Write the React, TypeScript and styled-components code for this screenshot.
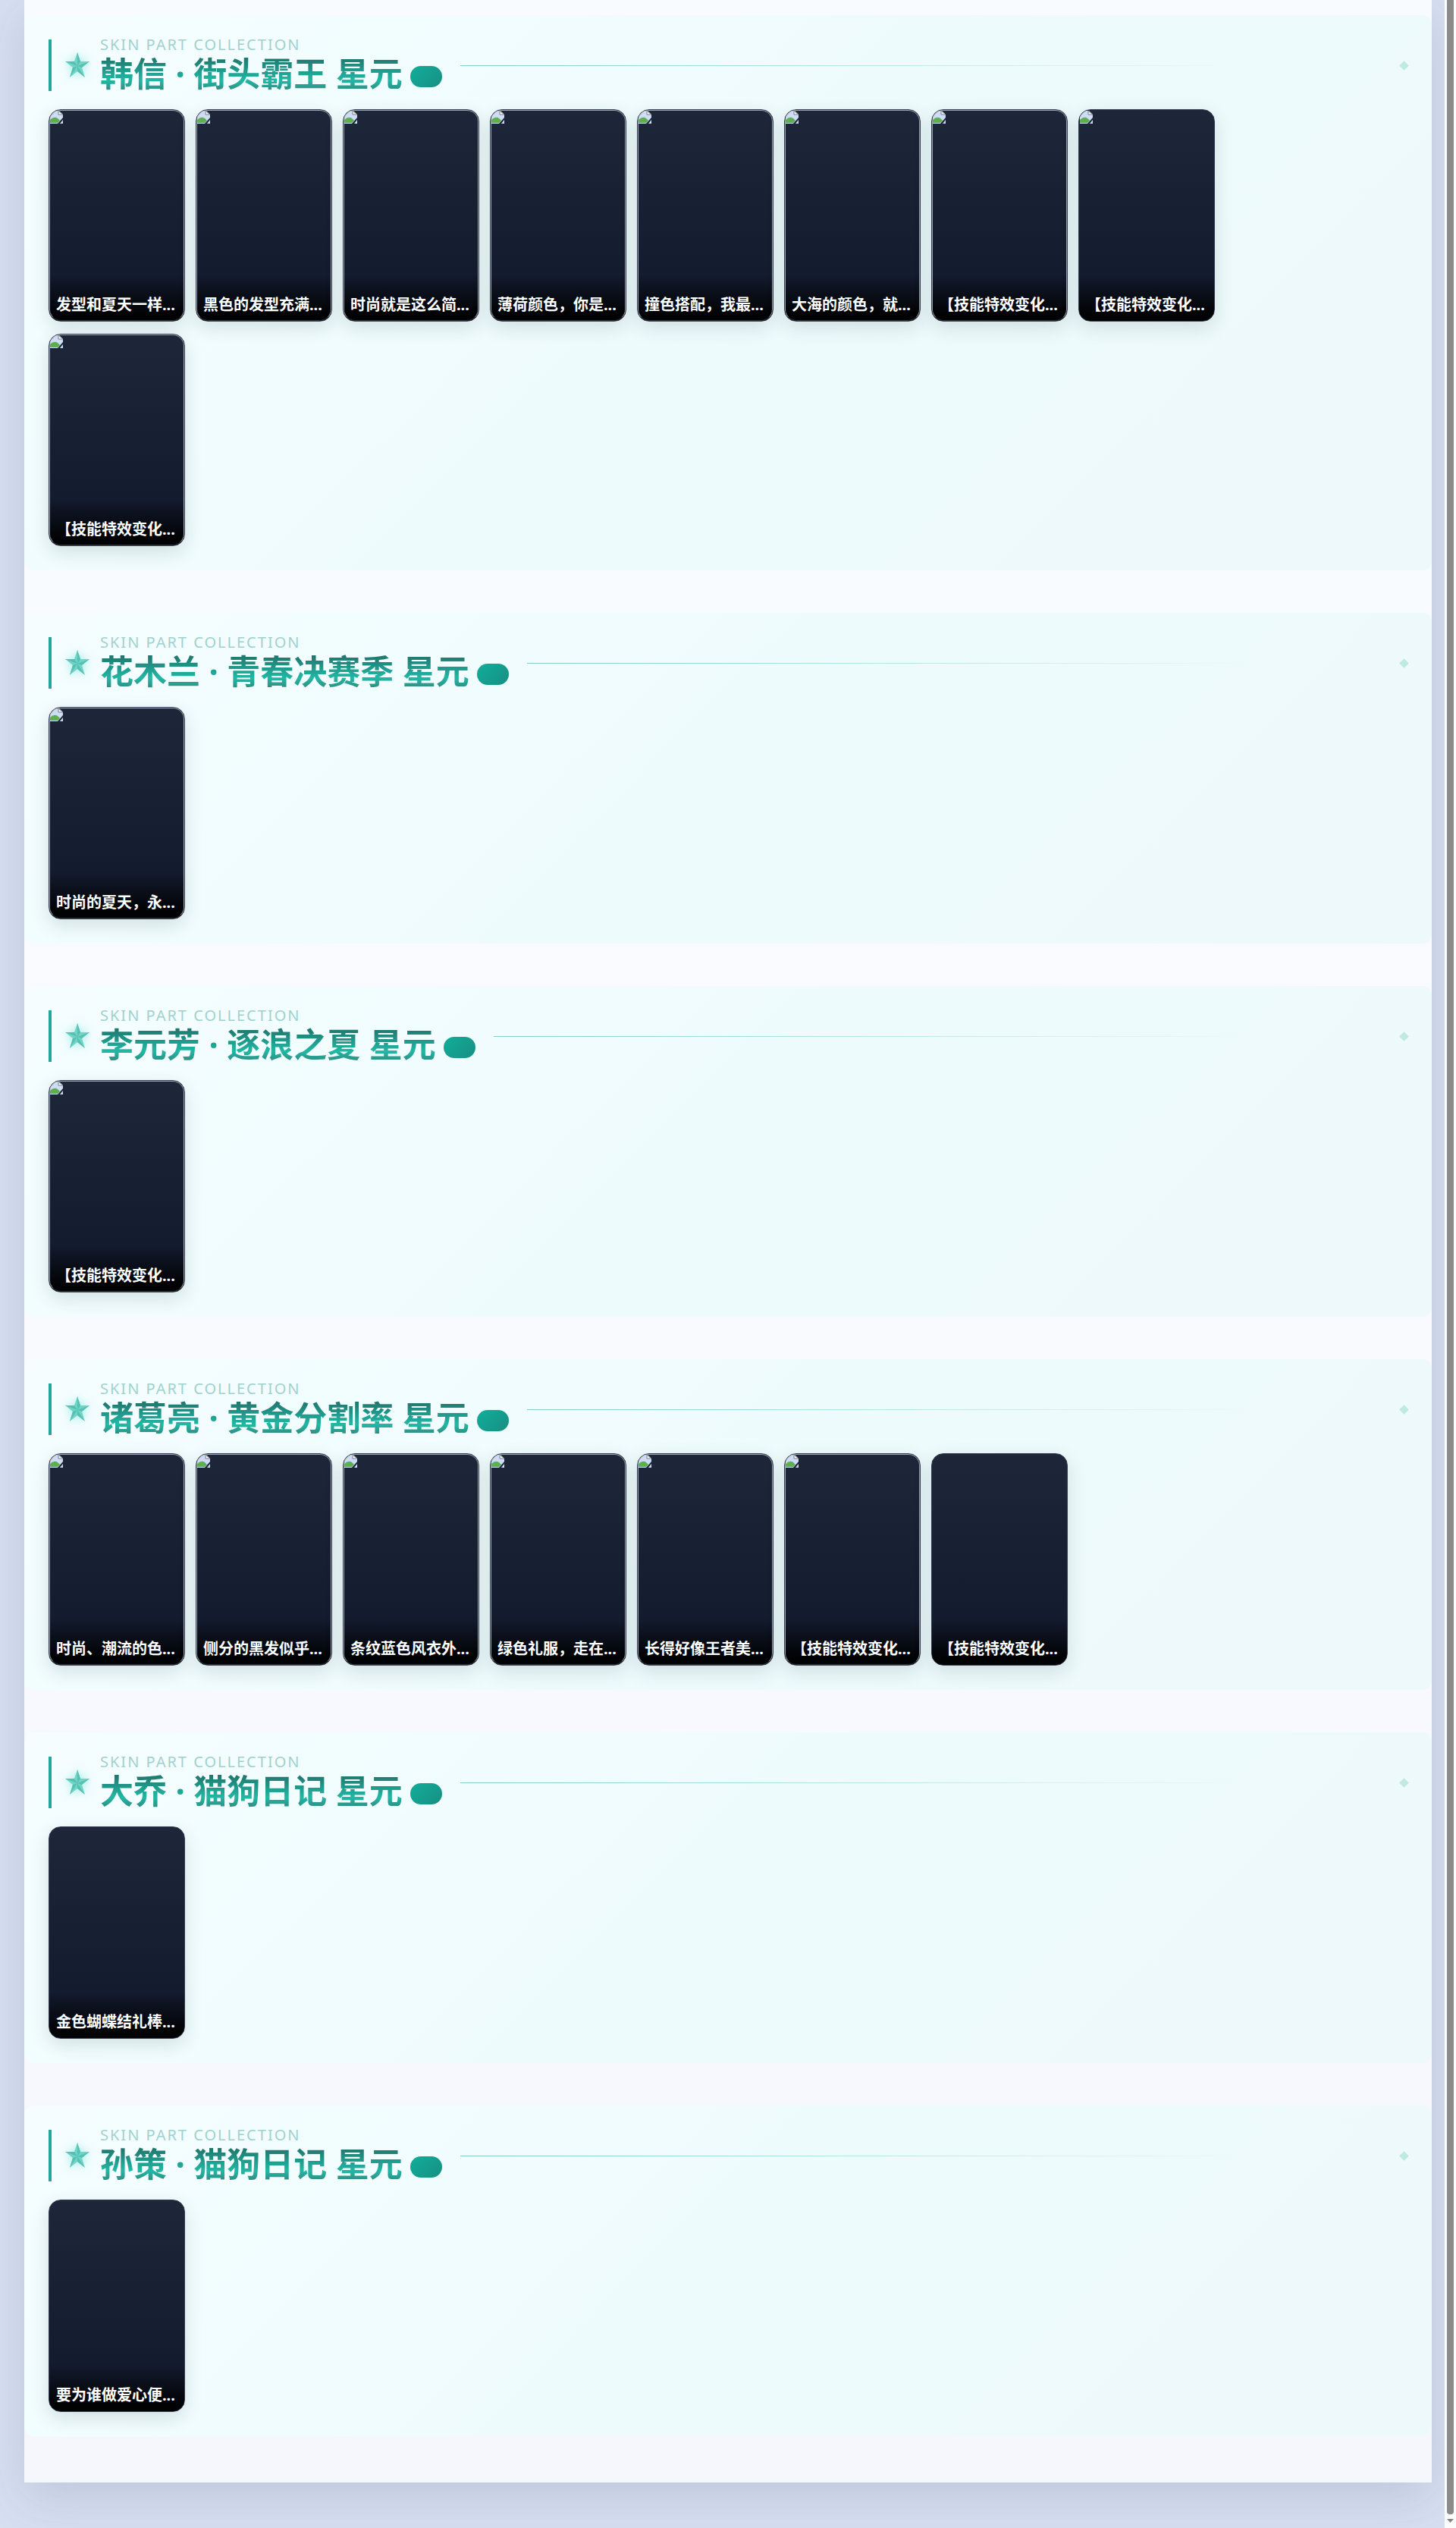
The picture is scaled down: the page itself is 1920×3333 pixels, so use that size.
import React from 'react';
import styled, { createGlobalStyle } from 'styled-components';

const GlobalStyle = createGlobalStyle`
  *, *::before, *::after { box-sizing: border-box; }
  html { background: #d6e0f0; }
  body {
    margin: 0;
    font-family: "Noto Sans", "Noto Sans CJK SC", sans-serif;
    -webkit-font-smoothing: antialiased;
  }
`;

const Shell = styled.div`
  display: grid;
  grid-template-columns: minmax(0, 1fr) 15px;
  overflow: hidden;
`;

const Backdrop = styled.div`
  padding: 0 17px 60px 32px;
  background: #d7e0f1;
`;

const Sheet = styled.main`
  display: flex;
  flex-direction: column;
  gap: 56px;
  padding: 20px 0 61px;
  background: linear-gradient(180deg, #f8fbff 0%, #f8fafe 60%, #f5f7fc 100%);
  box-shadow: 0 20px 60px rgba(80, 80, 130, 0.18);
`;

const Section = styled.section`
  padding: 32px;
  border-radius: 12px;
  background: linear-gradient(135deg, #f5fdff 0%, #f2fdfe 20%, #eefbfd 50%, #edf9fb 100%);
`;

const Header = styled.header`
  display: flex;
  align-items: center;
  height: 68px;
  margin-bottom: 24px;
  padding-left: 18px;
  border-left: 4px solid #26a69a;
`;

const Star = styled.svg`
  flex: none;
  width: 32px;
  height: 40px;
  margin-right: 14px;
  filter: drop-shadow(0 0 6px rgba(64, 224, 200, 0.5));
`;

const Eyebrow = styled.p`
  margin: 0 0 8px;
  font-size: 20px;
  line-height: 14px;
  letter-spacing: 2px;
  color: #a0d2cd;
`;

const Title = styled.h2`
  display: flex;
  align-items: center;
  gap: 10px;
  margin: 0;
  font-size: 44px;
  line-height: 46px;
  font-weight: 700;
  white-space: nowrap;
`;

const TitleText = styled.span`
  color: transparent;
  background: linear-gradient(180deg, #22756c 5%, #1f9a8c 40%, #22b8a5 70%, #2f8f84 95%);
  background-clip: text;
  -webkit-background-clip: text;
`;

const Pill = styled.span`
  width: 42px;
  height: 28px;
  margin-top: 8px;
  border-radius: 14px;
  background: linear-gradient(135deg, #12ae9b, #178f82);
`;

const Rule = styled.span`
  flex: 1;
  height: 1px;
  margin: 0 26px 0 24px;
  background: linear-gradient(90deg, #84cdc5, rgba(132, 205, 197, 0) 85%);
`;

const Diamond = styled.span`
  width: 9px;
  height: 9px;
  background: #bfeae1;
  transform: rotate(45deg);
`;

const Cards = styled.ul`
  display: flex;
  flex-wrap: wrap;
  gap: 16px 14px;
  max-width: 1600px;
  margin: 0;
  padding: 0;
  list-style: none;
`;

const Card = styled.li<{ $outlined: boolean }>`
  position: relative;
  display: flex;
  flex-direction: column;
  justify-content: space-between;
  width: 180px;
  height: 280px;
  overflow: hidden;
  border: 1px solid #333c50;
  border-radius: 16px;
  background: linear-gradient(180deg, #1e273a 0%, #10182b 100%);
  box-shadow: 0 8px 24px rgba(20, 60, 60, 0.14);

  &::after {
    content: "";
    position: absolute;
    inset: 0;
    border: ${(p) => (p.$outlined ? '1px solid rgba(192, 200, 205, 0.8)' : '0')};
    border-bottom-color: rgba(192, 200, 205, 0.25);
    border-radius: 15px;
  }
`;

const Broken = styled.svg`
  width: 18px;
  height: 18px;
`;

const Caption = styled.p`
  margin: auto 0 0;
  padding: 26px 9px 7px;
  overflow: hidden;
  font-size: 20px;
  line-height: 28px;
  font-weight: 700;
  color: #fff;
  white-space: nowrap;
  background: linear-gradient(180deg, rgba(0, 0, 0, 0), rgba(0, 0, 0, 0.9) 85%);
`;

const Scrollbar = styled.div`
  display: flex;
  flex-direction: column;
  align-items: center;
  background: #fcfcfc;
`;

const Thumb = styled.div`
  flex: 1;
  width: 9px;
  border-radius: 0 0 4px 4px;
  background: #8b8b8b;
`;

const Arrow = styled.svg`
  width: 9px;
  height: 18px;
`;

type Item = { text: string; icon: 'clipped' | 'plain' | 'none' };
type Group = { title: string; items: Item[] };

const item = (text: string, icon: Item['icon'] = 'clipped'): Item => ({ text, icon });

const groups: Group[] = [
  {
    title: '韩信 · 街头霸王 星元',
    items: [
      item('发型和夏天一样...'),
      item('黑色的发型充满...'),
      item('时尚就是这么简...'),
      item('薄荷颜色，你是...'),
      item('撞色搭配，我最...'),
      item('大海的颜色，就...'),
      item('【技能特效变化...'),
      item('【技能特效变化...', 'plain'),
      item('【技能特效变化...'),
    ],
  },
  { title: '花木兰 · 青春决赛季 星元', items: [item('时尚的夏天，永...')] },
  { title: '李元芳 · 逐浪之夏 星元', items: [item('【技能特效变化...')] },
  {
    title: '诸葛亮 · 黄金分割率 星元',
    items: [
      item('时尚、潮流的色...'),
      item('侧分的黑发似乎...'),
      item('条纹蓝色风衣外...'),
      item('绿色礼服，走在...'),
      item('长得好像王者美...'),
      item('【技能特效变化...'),
      item('【技能特效变化...', 'none'),
    ],
  },
  { title: '大乔 · 猫狗日记 星元', items: [item('金色蝴蝶结礼棒...', 'none')] },
  { title: '孙策 · 猫狗日记 星元', items: [item('要为谁做爱心便...', 'none')] },
];

function StarIcon() {
  return (
    <Star viewBox="0 0 32 40" aria-hidden="true">
      <path d="M16 3 L20 15 L32 15 L22 23 L26 36 L16 28 L6 36 L10 23 L0 15 L12 15 Z" fill="#6fd6c7" />
      <path
        d="M16 3 L20 15 L16 21 Z M32 15 L22 23 L16 21 Z M26 36 L16 28 L16 21 Z M6 36 L10 23 L16 21 Z M0 15 L12 15 L16 21 Z"
        fill="#58bfb3"
      />
    </Star>
  );
}

function BrokenImage() {
  return (
    <Broken viewBox="0 0 18 18" aria-hidden="true">
      <path d="M1 1 H13 L18 6 V18 H1 Z" fill="#cfdcf5" />
      <path d="M12 1 V6 H18 Z" fill="#fff" stroke="#77808c" strokeWidth="1" />
      <path d="M1 17 V13 Q8 6 14 14 L11 17 Z" fill="#5fae50" />
      <path d="M11 18 L18 10 V13 L14 18 Z" fill="#1e293b" />
    </Broken>
  );
}

export default function App() {
  return (
    <>
      <GlobalStyle />
      <Shell>
        <Backdrop>
          <Sheet>
            {groups.map((group) => (
              <Section key={group.title}>
                <Header>
                  <StarIcon />
                  <div>
                    <Eyebrow>SKIN PART COLLECTION</Eyebrow>
                    <Title>
                      <TitleText>{group.title}</TitleText>
                      <Pill />
                    </Title>
                  </div>
                  <Rule />
                  <Diamond />
                </Header>
                <Cards>
                  {group.items.map((entry, i) => (
                    <Card key={i} $outlined={entry.icon === 'clipped'}>
                      {entry.icon !== 'none' && <BrokenImage />}
                      <Caption>{entry.text}</Caption>
                    </Card>
                  ))}
                </Cards>
              </Section>
            ))}
          </Sheet>
        </Backdrop>
        <Scrollbar aria-hidden="true">
          <Thumb />
          <Arrow viewBox="0 0 9 18">
            <path d="M0 6 H9 L4.5 11 Z" fill="#858585" />
          </Arrow>
        </Scrollbar>
      </Shell>
    </>
  );
}
